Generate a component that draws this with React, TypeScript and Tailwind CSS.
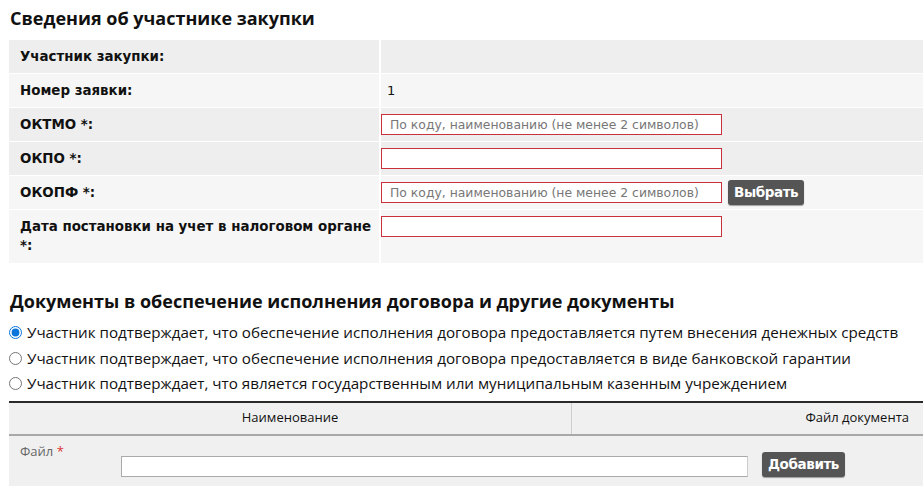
const rows = [
  { label: 'Участник закупки:', bg: 'bg-[#eeeeee]', kind: 'empty' },
  { label: 'Номер заявки:', bg: 'bg-[#f6f6f6]', kind: 'text' },
  { label: 'ОКТМО *:', bg: 'bg-[#eeeeee]', kind: 'search' },
  { label: 'ОКПО *:', bg: 'bg-[#eeeeee]', kind: 'input' },
  { label: 'ОКОПФ *:', bg: 'bg-[#f6f6f6]', kind: 'select' },
  { label: 'Дата постановки на учет в налоговом органе *:', bg: 'bg-[#f6f6f6]', kind: 'date' },
];

const placeholder = 'По коду, наименованию (не менее 2 символов)';

const radios = [
  'Участник подтверждает, что обеспечение исполнения договора предоставляется путем внесения денежных средств',
  'Участник подтверждает, что обеспечение исполнения договора предоставляется в виде банковской гарантии',
  'Участник подтверждает, что является государственным или муниципальным казенным учреждением',
];

function RedInput({ hint }: { hint?: string }) {
  return (
    <input
      type="text"
      placeholder={hint}
      className="h-[21px] w-[341px] border border-[#c8323c] bg-white px-2 font-['DejaVu_Sans',sans-serif] text-[12.4px] text-[#333] outline-none placeholder:text-[#777]"
    />
  );
}

function DarkButton({ children }: { children: React.ReactNode }) {
  return (
    <button
      type="button"
      className="h-[25px] rounded-[3px] bg-[#555555] px-[6px] font-['DejaVu_Sans',sans-serif] text-[13.5px] font-bold tracking-[-0.4px] text-white shadow-[0_1px_1px_rgba(0,0,0,0.35)]"
    >
      {children}
    </button>
  );
}

export default function App() {
  return (
    <div className="h-[500px] w-[923px] overflow-hidden bg-white text-[#111]">
      <h1 className="pl-[10px] pt-[5px] font-['Open_Sans',sans-serif] text-[18px] font-bold leading-[26px] text-[#111]">
        Сведения об участнике закупки
      </h1>

      <div className="ml-[9px] mt-[9px] flex flex-col gap-px">
        {rows.map((row) => (
          <div key={row.label} className={`flex ${row.kind === 'date' ? 'h-[53px]' : 'h-[33px]'}`}>
            <div
              className={`w-[370px] ${row.bg} pl-[11px] pr-[2px] font-['DejaVu_Sans',sans-serif] text-[13.4px] font-bold leading-[19px] ${
                row.kind === 'date' ? 'pt-[7px]' : 'flex items-center'
              }`}
            >
              {row.label}
            </div>
            <div
              className={`ml-[2px] flex-1 ${row.bg} flex gap-[6px] ${row.kind === 'date' ? 'items-start pt-[6px]' : 'items-center'}`}
            >
              {row.kind === 'text' && (
                <span className="pl-[6px] font-['DejaVu_Sans',sans-serif] text-[13px]">1</span>
              )}
              {row.kind === 'search' && <RedInput hint={placeholder} />}
              {row.kind === 'input' && <RedInput />}
              {row.kind === 'select' && (
                <>
                  <RedInput hint={placeholder} />
                  <DarkButton>Выбрать</DarkButton>
                </>
              )}
              {row.kind === 'date' && <RedInput />}
            </div>
          </div>
        ))}
      </div>

      <h2 className="mt-[25px] pl-[10px] font-['Open_Sans',sans-serif] text-[18px] font-bold leading-[26px] text-[#111]">
        Документы в обеспечение исполнения договора и другие документы
      </h2>

      <div className="mt-[6px] flex flex-col pl-[9px] font-['Open_Sans',sans-serif] text-[15.2px] leading-[25.5px] text-[#111]">
        {radios.map((text, i) => (
          <label key={text} className="flex items-center gap-[5px] whitespace-nowrap">
            <input type="radio" name="guarantee" defaultChecked={i === 0} className="m-0 h-[13px] w-[13px] accent-[#0a74da]" />
            {text}
          </label>
        ))}
      </div>

      <div className="ml-[9px] mt-[4px] border-t-2 border-[#2a2a2a] font-['Open_Sans',sans-serif] text-[13px]">
        <div className="flex h-[33px] border-b-2 border-[#a8a8a8] bg-[#f0f0f0]">
          <div className="flex w-[563px] items-center justify-center border-r border-[#cfcfcf]">Наименование</div>
          <div className="flex flex-1 items-center justify-end pr-[14px]">Файл документа</div>
        </div>
        <div className="flex h-[50px] bg-[#f0f0f0]">
          <div className="w-[112px] pl-[11px] pt-[6px] text-[#666]">
            Файл <span className="text-[#d33]">*</span>
          </div>
          <div className="flex flex-1 items-end gap-[14px] pb-[9px]">
            <input
              type="text"
              className="h-[21px] w-[627px] border border-[#aaa] border-r-[#ccc] bg-white outline-none"
            />
            <DarkButton>Добавить</DarkButton>
          </div>
        </div>
      </div>
    </div>
  );
}
